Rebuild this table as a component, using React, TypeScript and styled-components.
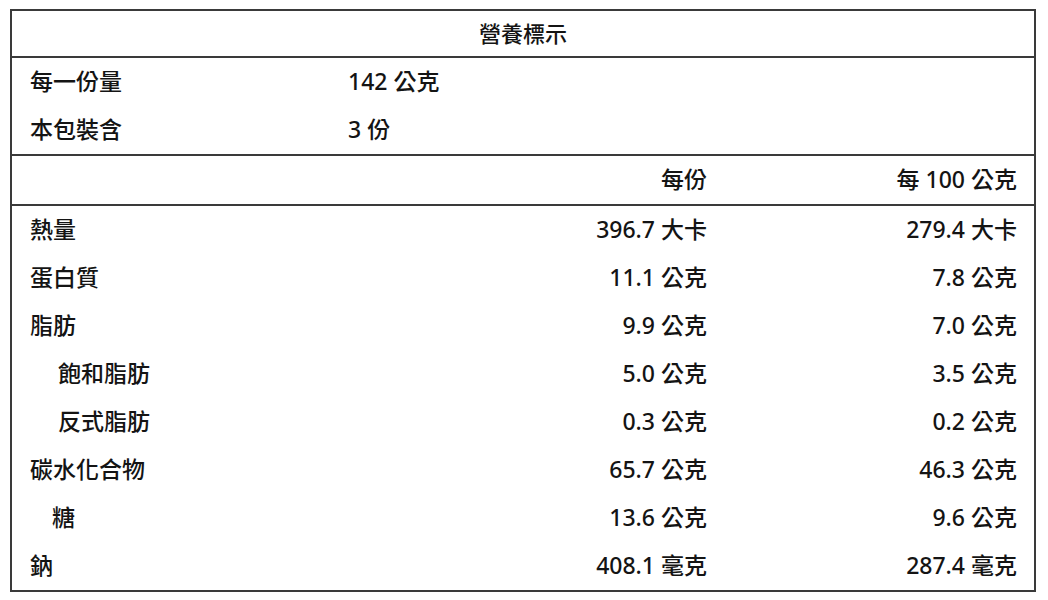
import styled, { createGlobalStyle } from "styled-components"

const GlobalStyle = createGlobalStyle`
  body {
    margin: 0;
    background: #fff;
    font-family: "Noto Sans", "Noto Sans CJK TC", sans-serif;
    color: #141414;
  }
`

const Label = styled.div`
  width: 1026px;
  margin: 9px 0 0 10px;
  border: 2px solid #3a3a3a;
  box-sizing: border-box;
  font-size: 23px;
  font-weight: 500;
`

const Title = styled.div`
  height: 47px;
  padding-bottom: 4px;
  box-sizing: border-box;
  display: flex;
  align-items: center;
  justify-content: center;
  border-bottom: 2px solid #3a3a3a;
  font-size: 22px;
`

const Section = styled.div<{ $bordered?: boolean }>`
  border-bottom: ${(p) => (p.$bordered ? "2px solid #3a3a3a" : "none")};
`

const InfoRow = styled.div`
  height: 48px;
  box-sizing: border-box;
  display: grid;
  grid-template-columns: 318px 1fr;
  align-items: center;
  padding: 0 0 4px 18px;
`

const Row = styled.div`
  height: 48px;
  box-sizing: border-box;
  display: grid;
  grid-template-columns: 1fr 310px 310px;
  align-items: center;
  padding: 0 17px 4px 18px;
`

const Name = styled.span<{ $indent?: number }>`
  padding-left: ${(p) => p.$indent ?? 0}px;
`

const Num = styled.span`
  text-align: right;
`

const servings = [
  ["每一份量", "142 公克"],
  ["本包裝含", "3 份"],
]

const nutrients: [string, string, string, number][] = [
  ["熱量", "396.7 大卡", "279.4 大卡", 0],
  ["蛋白質", "11.1 公克", "7.8 公克", 0],
  ["脂肪", "9.9 公克", "7.0 公克", 0],
  ["飽和脂肪", "5.0 公克", "3.5 公克", 28],
  ["反式脂肪", "0.3 公克", "0.2 公克", 28],
  ["碳水化合物", "65.7 公克", "46.3 公克", 0],
  ["糖", "13.6 公克", "9.6 公克", 22],
  ["鈉", "408.1 毫克", "287.4 毫克", 0],
]

const App = () => {
  return (
    <>
      <GlobalStyle />
      <Label>
        <Title>營養標示</Title>
        <Section $bordered>
          {servings.map(([k, v]) => (
            <InfoRow key={k}>
              <span>{k}</span>
              <span>{v}</span>
            </InfoRow>
          ))}
        </Section>
        <Section $bordered>
          <Row>
            <span />
            <Num>每份</Num>
            <Num>每 100 公克</Num>
          </Row>
        </Section>
        <Section>
          {nutrients.map(([name, a, b, indent]) => (
            <Row key={name}>
              <Name $indent={indent}>{name}</Name>
              <Num>{a}</Num>
              <Num>{b}</Num>
            </Row>
          ))}
        </Section>
      </Label>
    </>
  )
}

export default App
